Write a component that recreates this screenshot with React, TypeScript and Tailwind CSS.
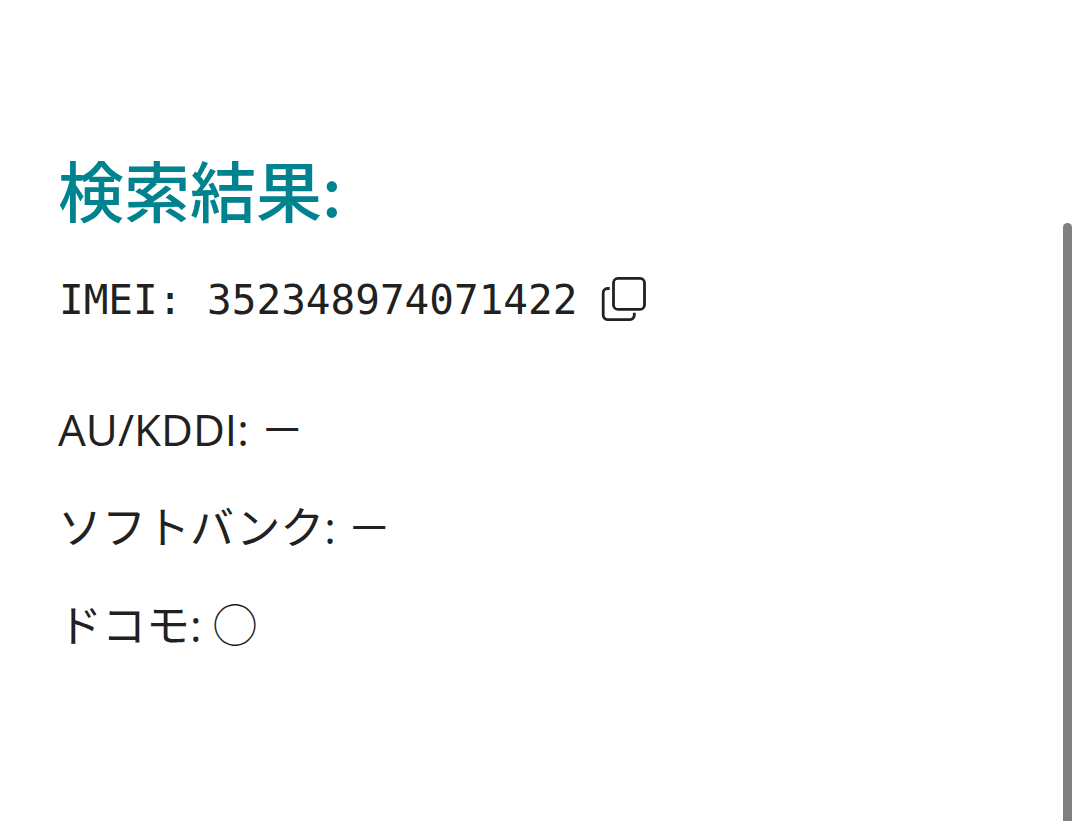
const carriers = [
  { name: "AU/KDDI", status: "－" },
  { name: "ソフトバンク", status: "－" },
  { name: "ドコモ", status: "◯" },
];

function CopyIcon() {
  return (
    <svg width="46" height="46" viewBox="0 0 46 46" fill="none" stroke="currentColor" strokeWidth="2.8" aria-hidden="true">
      <rect x="12.500" y="1.400" width="31" height="31" rx="4.5" />
      <path d="M8.700 11.500H6.500a4.300 4.300 0 0 0-4.300 4.300v22.500a4.300 4.300 0 0 0 4.300 4.300h22.500a4.300 4.300 0 0 0 4.300-4.300v-2.500" />
    </svg>
  );
}

export default function App() {
  return (
    <div className="flex h-screen justify-between overflow-hidden bg-white font-['Open_Sans','Noto_Sans_CJK_JP',sans-serif] text-[#212121]">
      <main className="px-[58px] pt-[140px]">
        <h1 className="font-['Noto_Sans_CJK_JP',sans-serif] text-[66px] leading-[96px] font-medium text-[#00838f]">検索結果:</h1>
        <div className="mt-8 flex items-center gap-6 pl-px font-['DejaVu_Sans_Mono',monospace] text-[41px] leading-[64px]">
          <p>IMEI: 352348974071422</p>
          <button type="button" aria-label="コピー"><CopyIcon /></button>
        </div>
        <ul className="mt-16 flex flex-col gap-8 text-[44px] leading-[66px]">
          {carriers.map((c) => (
            <li key={c.name}>{c.name}: {c.status}</li>
          ))}
        </ul>
      </main>
      <div className="mt-[223px] mr-2 w-[9px] rounded-t-full bg-[#808080]" />
    </div>
  );
}
